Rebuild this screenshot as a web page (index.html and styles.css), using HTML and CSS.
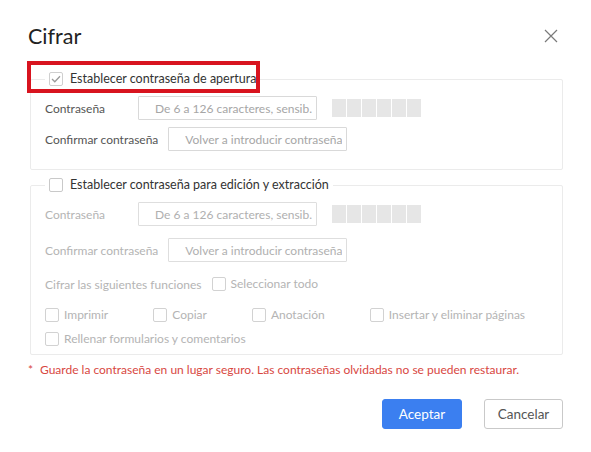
FILE: index.html
```html
<!DOCTYPE html>
<html>
  <head>
    <title>Cifrar</title>
    <link rel="stylesheet" href="styles.css">
  </head>
  <body>
    <div class="dialog">
      <div class="dialog-header">
        <h1 class="dialog-title">Cifrar</h1>
        <button class="close" type="button" aria-label="Cerrar">
          <svg width="14" height="14" viewBox="0 0 14 14">
            <path d="M1 1L13 13M13 1L1 13" stroke="#7a7a7a" stroke-width="1.2" fill="none" />
          </svg>
        </button>
      </div>

      <fieldset class="group">
        <legend class="group-legend marked">
          <span class="check">
            <span class="box checked">
              <svg width="10" height="8" viewBox="0 0 10 8">
                <path d="M1 4l2.8 2.8L9 1.2" stroke="#9a9a9a" stroke-width="1.3" fill="none" />
              </svg>
            </span>
            Establecer contraseña de apertura
          </span>
        </legend>
        <div class="row">
          <span class="row-label">Contraseña</span>
          <input class="field" type="text" placeholder="De 6 a 126 caracteres, sensib..." />
          <div class="meter"><span></span><span></span><span></span><span></span><span></span><span></span></div>
        </div>
        <div class="row row-tight">
          <span class="row-label">Confirmar contraseña</span>
          <input class="field" type="text" placeholder="Volver a introducir contraseña" />
        </div>
      </fieldset>

      <fieldset class="group group-off">
        <legend class="group-legend">
          <span class="check"><span class="box"></span>Establecer contraseña para edición y extracción</span>
        </legend>
        <div class="row">
          <span class="row-label">Contraseña</span>
          <input class="field" type="text" placeholder="De 6 a 126 caracteres, sensib..." disabled />
          <div class="meter"><span></span><span></span><span></span><span></span><span></span><span></span></div>
        </div>
        <div class="row row-wide">
          <span class="row-label">Confirmar contraseña</span>
          <input class="field" type="text" placeholder="Volver a introducir contraseña" disabled />
        </div>
        <div class="line line-funcs">
          <span class="row-label plain">Cifrar las siguientes funciones</span>
          <span class="check"><span class="box"></span>Seleccionar todo</span>
        </div>
        <div class="line line-perms">
          <span class="check"><span class="box"></span>Imprimir</span>
          <span class="check"><span class="box"></span>Copiar</span>
          <span class="check"><span class="box"></span>Anotación</span>
          <span class="check"><span class="box"></span>Insertar y eliminar páginas</span>
        </div>
        <div class="line line-last">
          <span class="check"><span class="box"></span>Rellenar formularios y comentarios</span>
        </div>
      </fieldset>

      <p class="warning"><span class="star">*</span>Guarde la contraseña en un lugar seguro. Las contraseñas olvidadas no se pueden restaurar.</p>

      <div class="actions">
        <button class="btn btn-primary" type="button">Aceptar</button>
        <button class="btn" type="button">Cancelar</button>
      </div>
    </div>
  </body>
</html>
```

FILE: styles.css
```css
body {
  margin: 0;
  background: #ffffff;
  font-family: Lato, "Noto Sans", sans-serif;
  font-size: 12px;
  color: #333;
}

.dialog {
  width: 591px;
  height: 452px;
  box-sizing: border-box;
  padding: 22px 28px 0 28px;
}

.dialog-header {
  display: flex;
  align-items: center;
  justify-content: space-between;
  height: 28px;
}

.dialog-title {
  margin: 0;
  font-size: 21.5px;
  font-weight: 400;
  color: #222;
  line-height: 26px;
}

.close {
  background: none;
  border: none;
  padding: 0;
  margin-right: 5px;
  width: 14px;
  height: 14px;
  cursor: pointer;
}

.close svg {
  display: block;
}

.group {
  margin: 21px 0 0 2px;
  padding: 9px 16px 18px 14px;
  border: 1px solid #ebebeb;
  border-radius: 2px;
  min-width: 0;
}

.group-off {
  margin-top: 7px;
  padding-bottom: 7px;
}

.group-legend {
  display: block;
  height: 16px;
  padding: 0 4px;
  position: relative;
}

/* red highlight box around the first option */
.marked::after {
  content: "";
  position: absolute;
  left: -18px;
  right: 0;
  top: -10px;
  bottom: -6px;
  border: 4px solid #d8141f;
}

.check {
  display: flex;
  align-items: center;
  gap: 5px;
  height: 16px;
  line-height: 16px;
  white-space: nowrap;
}

.group-legend .check {
  gap: 7px;
  color: #333;
  font-size: 12.5px;
}

.box {
  width: 14px;
  height: 14px;
  box-sizing: border-box;
  border: 1px solid #c9c9c9;
  border-radius: 2px;
  background: #fff;
  display: inline-flex;
  align-items: center;
  justify-content: center;
  flex: none;
}

.box.checked {
  border-color: #cfcfcf;
}

.row {
  display: flex;
  align-items: center;
  height: 24px;
}

.row-tight {
  margin-top: 7px;
}

.row-wide {
  margin-top: 12px;
}

.row-label {
  min-width: 83px;
  margin-right: 10px;
  color: #555;
  white-space: nowrap;
}

.field {
  width: 179px;
  height: 24px;
  box-sizing: border-box;
  border: 1px solid #d9d9d9;
  border-radius: 1px;
  padding: 0 4px 0 16px;
  font-family: inherit;
  font-size: 12px;
  color: #333;
  background: #fff;
  outline: none;
}

.field::placeholder {
  color: #a6a6a6;
}

.meter {
  display: flex;
  gap: 1px;
  margin-left: 15px;
}

.meter span {
  width: 14px;
  height: 18px;
  background: #e6e6e6;
}

.group-off .row-label,
.group-off .line .check {
  color: #b4b4b4;
}

.group-off .field {
  border-color: #dedede;
}

.group-off .field::placeholder {
  color: #b0b0b0;
}

.group-off .line .box {
  border-color: #d2d2d2;
}

.line {
  display: flex;
  align-items: center;
  height: 16px;
}

.line-funcs {
  margin-top: 14px;
}

.line-funcs .row-label {
  min-width: 0;
}

.line-perms {
  margin-top: 15px;
  gap: 45px;
}

.line-last {
  margin-top: 8px;
}

.warning {
  margin: 7px 0 0 0;
  line-height: 16px;
  color: #d8473f;
  white-space: nowrap;
}

.star {
  display: inline-block;
  width: 12px;
}

.actions {
  display: flex;
  justify-content: flex-end;
  gap: 22px;
  margin-top: 21px;
}

.btn {
  height: 30px;
  box-sizing: border-box;
  border: 1px solid #c9c9c9;
  border-radius: 3px;
  background: #fff;
  color: #555;
  font-family: inherit;
  font-size: 13.5px;
  padding: 0;
  width: 79px;
  cursor: pointer;
}

.btn-primary {
  background: #3b7ff0;
  border-color: #3b7ff0;
  color: #fff;
  width: 80px;
}
```
